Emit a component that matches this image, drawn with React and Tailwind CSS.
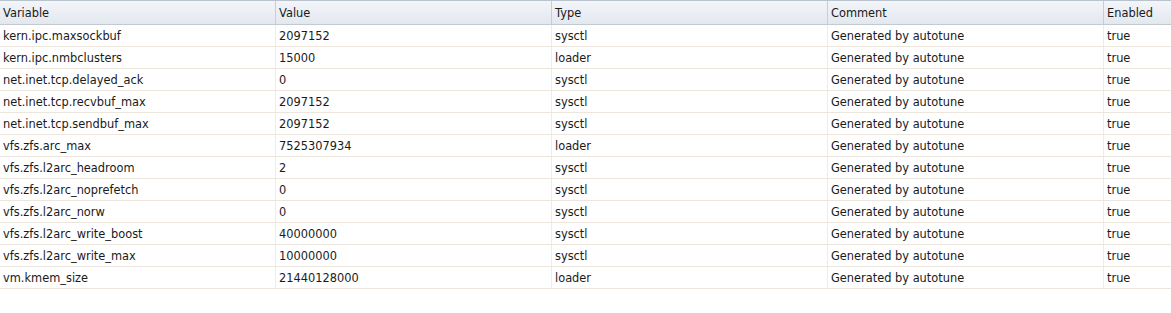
const rows = [
  ['kern.ipc.maxsockbuf', '2097152', 'sysctl'],
  ['kern.ipc.nmbclusters', '15000', 'loader'],
  ['net.inet.tcp.delayed_ack', '0', 'sysctl'],
  ['net.inet.tcp.recvbuf_max', '2097152', 'sysctl'],
  ['net.inet.tcp.sendbuf_max', '2097152', 'sysctl'],
  ['vfs.zfs.arc_max', '7525307934', 'loader'],
  ['vfs.zfs.l2arc_headroom', '2', 'sysctl'],
  ['vfs.zfs.l2arc_noprefetch', '0', 'sysctl'],
  ['vfs.zfs.l2arc_norw', '0', 'sysctl'],
  ['vfs.zfs.l2arc_write_boost', '40000000', 'sysctl'],
  ['vfs.zfs.l2arc_write_max', '10000000', 'sysctl'],
  ['vm.kmem_size', '21440128000', 'loader'],
];

const cols = ['Variable', 'Value', 'Type', 'Comment', 'Enabled'];
const grid = 'grid grid-cols-[276px_276px_276px_276px_1fr]';

export default function App() {
  return (
    <div className="w-[1171px] h-[313px] bg-white text-[11.4px] text-[#1a1a1a] font-['Tahoma','DejaVu_Sans',sans-serif]">
      {/* Header */}
      <div className={`${grid} h-[25px] border-t border-[#b9c3d0] border-b border-b-[#c3c9d1] bg-gradient-to-b from-[#f3f5f9] to-[#e3e8ef]`}>
        {cols.map((c, i) => (
          <div
            key={c}
            className={`flex items-center pt-[3px] px-[3px] ${i < 4 ? 'border-r border-[#c8ced6]' : ''}`}
          >
            {c}
          </div>
        ))}
      </div>

      {/* Rows */}
      {rows.map(([v, val, type]) => (
        <div key={v} className={`${grid} h-[22px] border-b border-[#ede6dc]`}>
          {[v, val, type, 'Generated by autotune', 'true'].map((t, i) => (
            <div
              key={i}
              className={`flex items-center pt-[3px] px-[3px] ${i < 4 ? 'border-r border-[#ececec]' : ''}`}
            >
              {t}
            </div>
          ))}
        </div>
      ))}
    </div>
  );
}
